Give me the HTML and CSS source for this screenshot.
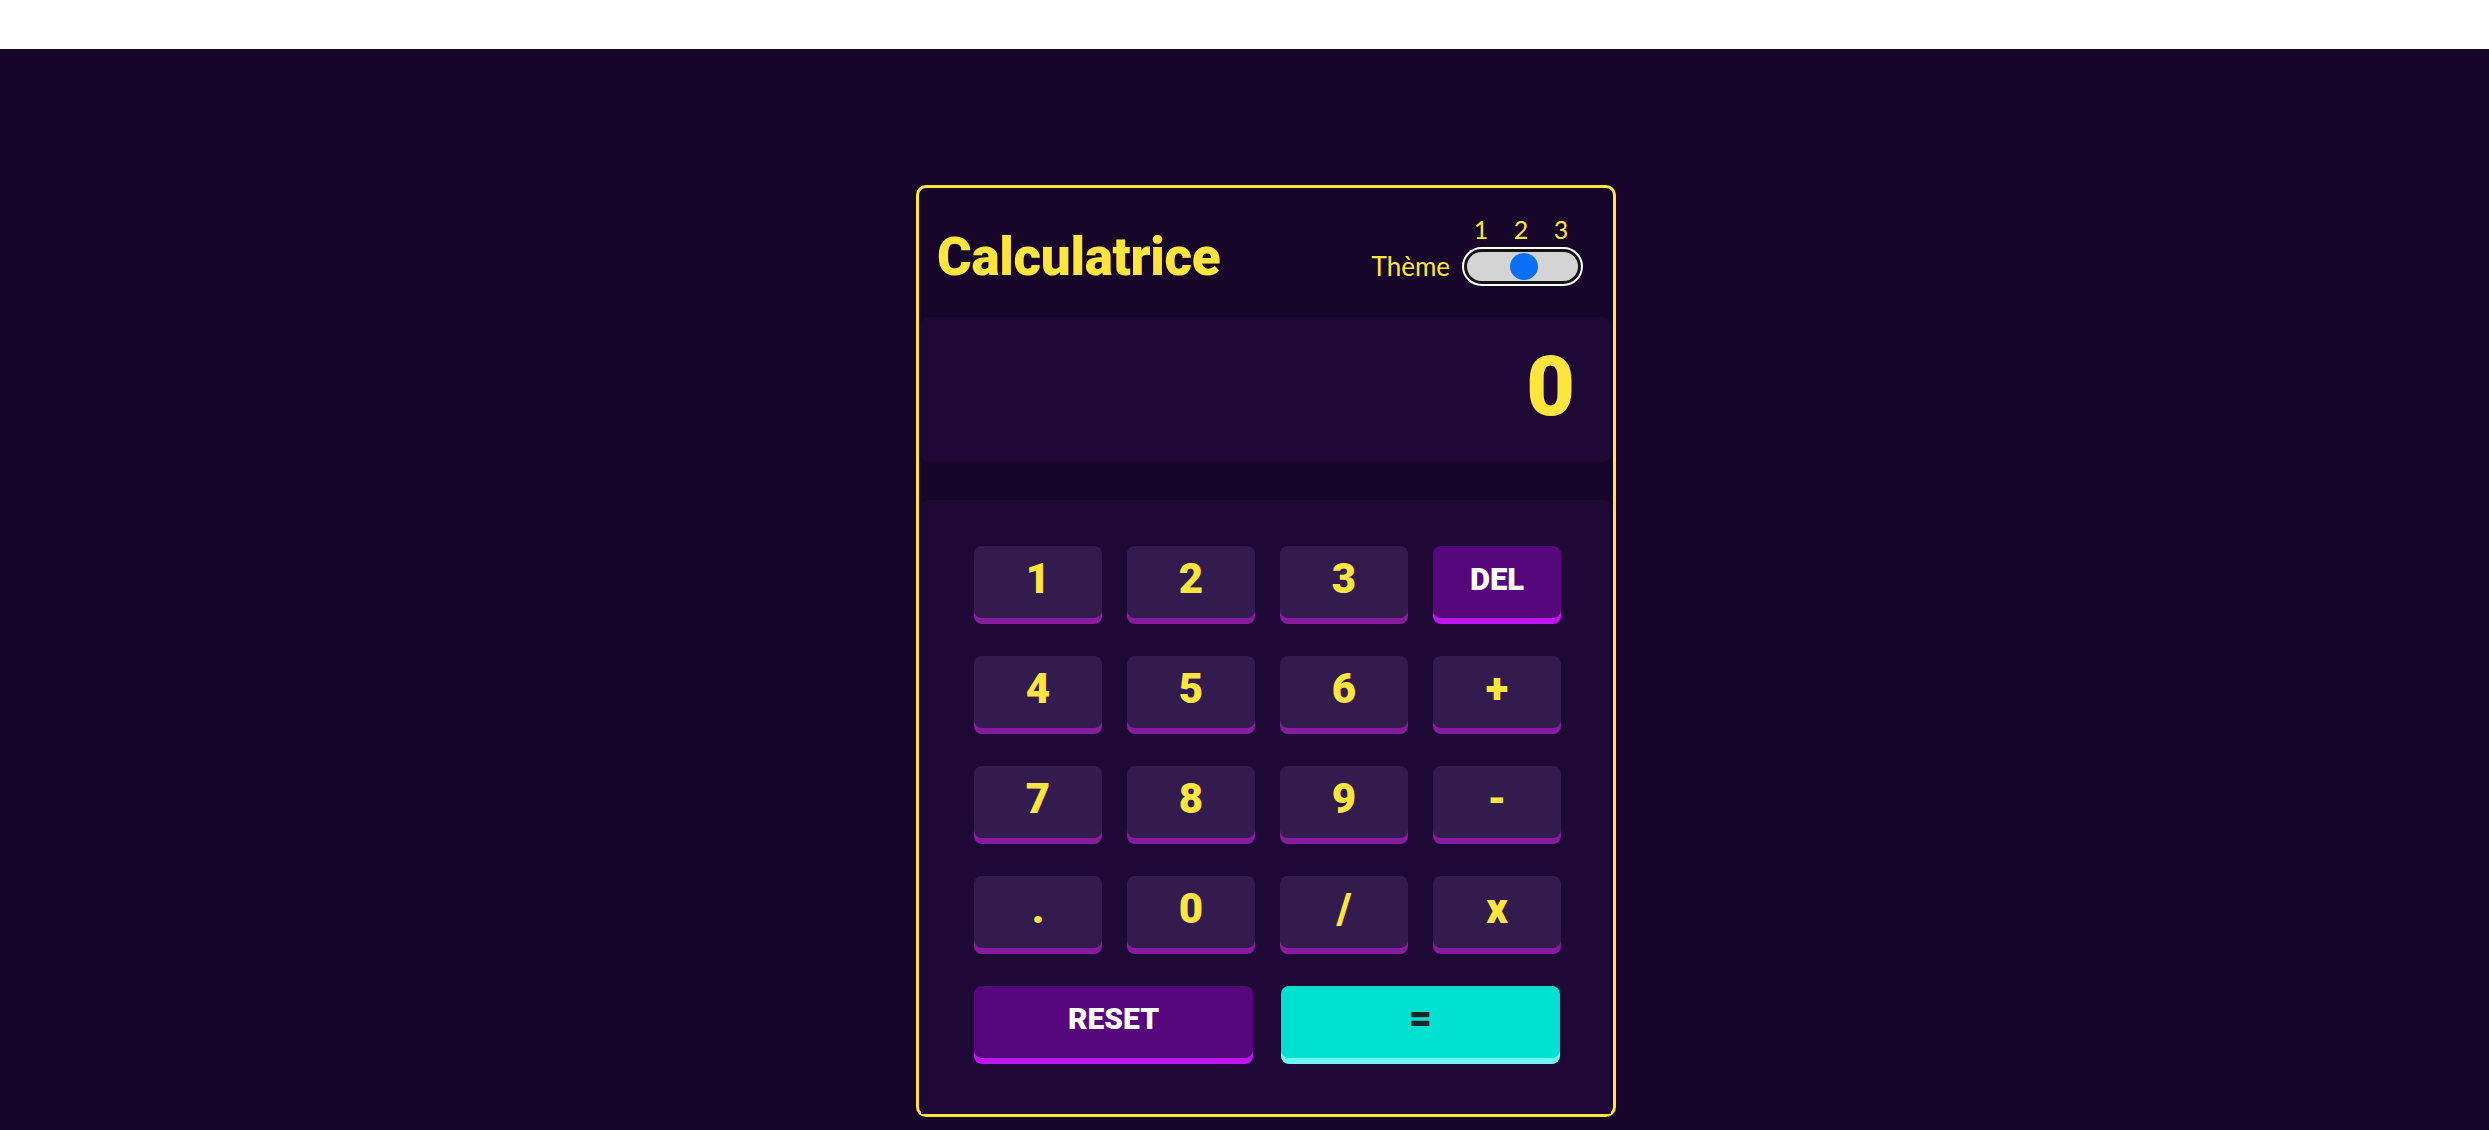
FILE: index.html
```html
<!DOCTYPE html>
<html lang="fr">
<head>
<meta charset="utf-8">
<title>Calculatrice</title>
<link rel="stylesheet" href="styles.css">
</head>
<body>
<main class="page">
  <section class="calc">
    <header class="calc-header">
      <h1 class="title">Calculatrice</h1>
      <div class="theme">
        <span class="theme-label">Thème</span>
        <div class="theme-control">
          <div class="theme-nums"><span>1</span><span>2</span><span>3</span></div>
          <div class="switch"><span class="knob"></span></div>
        </div>
      </div>
    </header>
    <div class="screen">0</div>
    <div class="keypad">
      <button class="key">1</button>
      <button class="key">2</button>
      <button class="key">3</button>
      <button class="key key-accent key-del">DEL</button>
      <button class="key">4</button>
      <button class="key">5</button>
      <button class="key">6</button>
      <button class="key">+</button>
      <button class="key">7</button>
      <button class="key">8</button>
      <button class="key">9</button>
      <button class="key">-</button>
      <button class="key">.</button>
      <button class="key">0</button>
      <button class="key">/</button>
      <button class="key">x</button>
      <button class="key key-wide key-accent key-reset">RESET</button>
      <button class="key key-wide key-equal">=</button>
    </div>
  </section>
</main>
</body>
</html>
```
FILE: styles.css
```css
* { box-sizing: border-box; }
html, body { margin: 0; padding: 0; background: #ffffff; }
body { font-family: "Lato", "Open Sans", sans-serif; }

.page {
  margin-top: 49px;
  min-height: calc(100vh - 49px);
  background: #17062a;
  display: flex;
  justify-content: center;
  padding-top: 136px;
  padding-bottom: 16px;
  padding-left: 43px;
}

.calc {
  width: 700px;
  border: 3px solid #ffe53d;
  border-radius: 10px;
  padding: 0 2px;
  background: #17062a;
  align-self: flex-start;
}

.calc-header {
  height: 129px;
  display: flex;
  align-items: center;
  justify-content: space-between;
  padding: 0 30px 0 16px;
}

.title {
  margin: 0;
  padding-top: 8px;
  color: #ffe53d;
  font-family: "Roboto", "Lato", sans-serif;
  font-size: 53px;
  font-weight: 900;
  letter-spacing: -0.3px;
}

.theme {
  display: flex;
  align-items: flex-end;
  align-self: flex-start;
  gap: 14px;
  color: #ffe53d;
  margin-top: 27px;
}

.theme-label {
  font-size: 26px;
  line-height: 28px;
  padding-bottom: 4px;
}

.theme-control {
  display: flex;
  flex-direction: column;
  gap: 6px;
}

.theme-nums {
  display: grid;
  grid-template-columns: repeat(3, 40px);
  margin-left: -3px;
  font-size: 25px;
  line-height: 28px;
  text-align: center;
}

.switch {
  width: 117px;
  height: 35px;
  border-radius: 18px;
  background: #d4d4d4;
  border: 3px solid #151515;
  box-shadow: 0 0 0 2px #ffffff;
  display: flex;
  align-items: center;
  justify-content: center;
  padding-left: 2px;
}

.knob {
  width: 28px;
  height: 27px;
  border-radius: 50%;
  background: #0a6ff7;
}

.screen {
  height: 145px;
  background: #1e0936;
  border-radius: 8px;
  color: #ffe53d;
  font-family: "Roboto", "Lato", sans-serif;
  font-size: 84px;
  font-weight: 900;
  line-height: 140px;
  text-align: right;
  padding-right: 36px;
  margin-bottom: 38px;
}

.keypad {
  background: #1e0936;
  border-radius: 8px 8px 0 0;
  padding: 46px 51px 56px 53px;
  display: grid;
  grid-template-columns: repeat(4, 128px);
  column-gap: 25px;
  row-gap: 38px;
}

.key {
  height: 72px;
  border: 0;
  border-radius: 8px;
  background: #331c4d;
  box-shadow: 0 6px 0 #881c9e;
  color: #ffe53d;
  font-family: "Roboto", "Lato", sans-serif;
  font-size: 42px;
  font-weight: 900;
  line-height: 1;
  padding: 0 0 6px;
  cursor: pointer;
}

.key-accent {
  background: #56077c;
  box-shadow: 0 6px 0 #be15f4;
  color: #ffffff;
}

.key-del { font-size: 31px; }

.key-wide {
  grid-column: span 2;
  width: 279px;
}

.key-reset { font-size: 30px; }

.key-equal {
  background: #00e0d1;
  box-shadow: 0 6px 0 #6cf9f1;
  color: #1b2428;
  font-size: 40px;
  margin-left: 1px;
}
```
